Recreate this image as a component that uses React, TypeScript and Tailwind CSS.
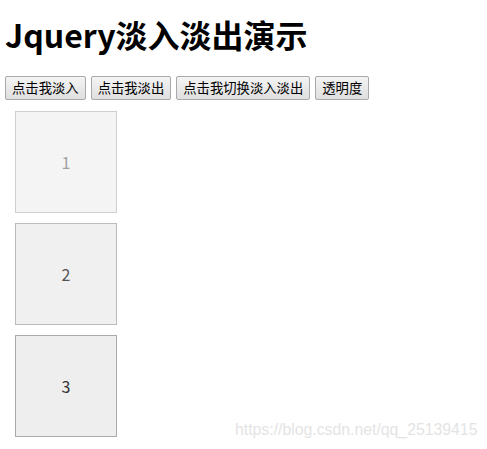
import React from "react";

const font = { fontFamily: '"Noto Sans CJK SC", "Noto Sans", sans-serif' };

function Btn({ children }: { children: React.ReactNode }) {
  return (
    <button className="h-[24px] px-[6px] text-[13.33px] leading-none text-black border border-[#a9a9a9] rounded-[2px] bg-gradient-to-b from-[#f4f4f4] to-[#dfdfdf]">
      {children}
    </button>
  );
}

export default function App() {
  const boxes = [
    { n: "1", cls: "bg-[#f4f4f4] border-[#cfcfcf] text-[#a0a0a0]" },
    { n: "2", cls: "bg-[#f0f0f0] border-[#bcbcbc] text-[#555555]" },
    { n: "3", cls: "bg-[#eeeeee] border-[#aaaaaa] text-[#333333]" },
  ];
  return (
    <div className="relative w-[487px] h-[449px] bg-white overflow-hidden px-[5px]" style={font}>
      <h1 className="text-[32px] font-bold leading-[37px] pt-[16px] m-0 text-black">Jquery淡入淡出演示</h1>
      <div className="flex gap-[5px] mt-[23px]">
        <Btn>点击我淡入</Btn>
        <Btn>点击我淡出</Btn>
        <Btn>点击我切换淡入淡出</Btn>
        <Btn>透明度</Btn>
      </div>
      <div className="flex flex-col gap-[10px] mt-[11px] ml-[10px]">
        {boxes.map((b) => (
          <div
            key={b.n}
            className={`w-[102px] h-[102px] border flex items-center justify-center text-[16px] ${b.cls}`}
          >
            {b.n}
          </div>
        ))}
      </div>
      <div
        className="absolute left-[235px] top-[420px] text-[15.8px] leading-[20px] text-[#e4e4e4]"
        style={{ fontFamily: '"Liberation Sans", Arial, sans-serif' }}
      >
        https://blog.csdn.net/qq_25139415
      </div>
    </div>
  );
}
